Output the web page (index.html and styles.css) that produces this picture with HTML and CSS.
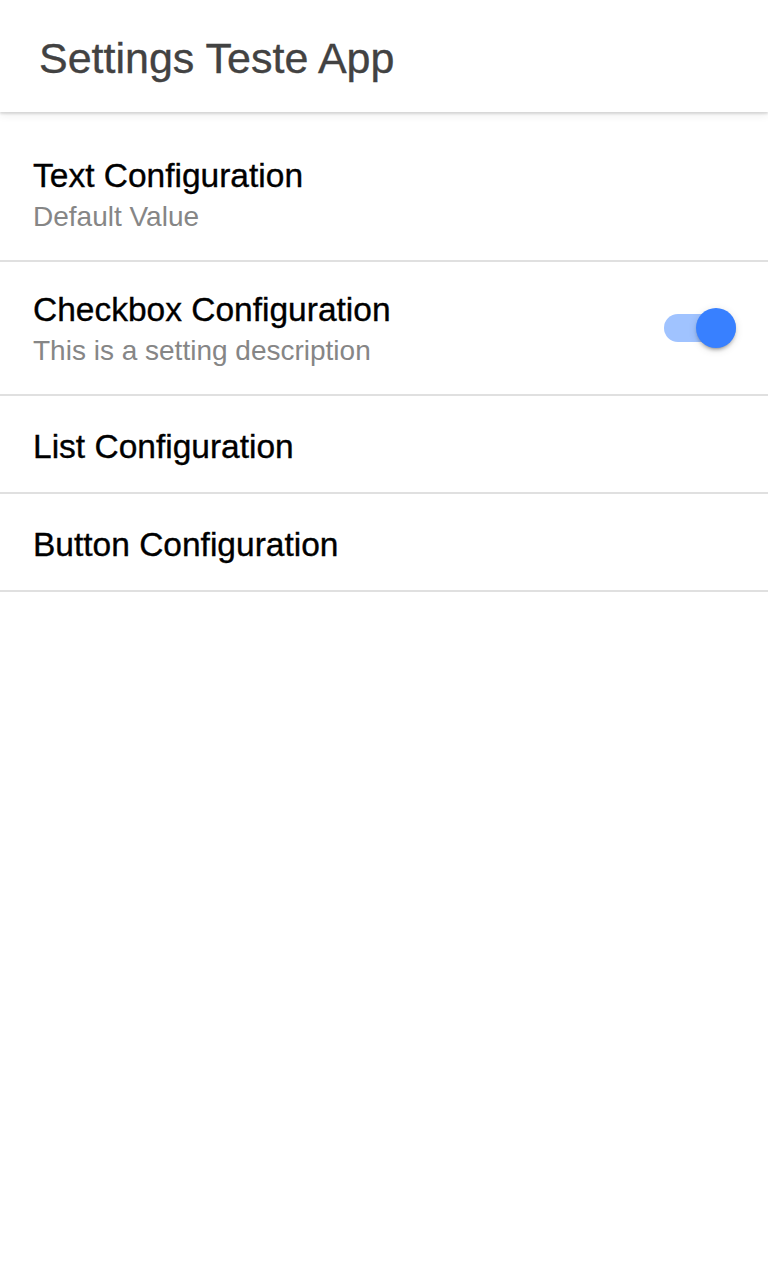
FILE: index.html
```html
<!DOCTYPE html>
<html lang="en">
<head>
<meta charset="utf-8">
<title>Settings Teste App</title>
<link rel="stylesheet" href="styles.css">
</head>
<body>
  <header class="toolbar">
    <h1 class="toolbar-title">Settings Teste App</h1>
  </header>
  <main class="content">
    <ul class="list">
      <li class="item">
        <div class="label two-line">
          <h2 class="item-title">Text Configuration</h2>
          <p class="item-desc">Default Value</p>
        </div>
      </li>
      <li class="item">
        <div class="label two-line">
          <h2 class="item-title">Checkbox Configuration</h2>
          <p class="item-desc">This is a setting description</p>
        </div>
        <div class="toggle" role="switch" aria-checked="true">
          <span class="toggle-track"></span>
          <span class="toggle-thumb"></span>
        </div>
      </li>
      <li class="item">
        <div class="label">
          <h2 class="item-title">List Configuration</h2>
        </div>
      </li>
      <li class="item">
        <div class="label">
          <h2 class="item-title">Button Configuration</h2>
        </div>
      </li>
    </ul>
  </main>
</body>
</html>
```

FILE: styles.css
```css
* {
  box-sizing: border-box;
}

html, body {
  margin: 0;
  padding: 0;
  background: #ffffff;
  font-family: "Liberation Sans", Arial, Helvetica, sans-serif;
}

.toolbar {
  position: relative;
  z-index: 1;
  height: 112px;
  padding: 34px 39px 0;
  background: #ffffff;
  box-shadow: 0 2px 2px rgba(0, 0, 0, 0.12), 0 4px 8px rgba(0, 0, 0, 0.06);
}

.toolbar-title {
  margin: 0;
  font-size: 43px;
  line-height: 48px;
  font-weight: 400;
  color: #424242;
  -webkit-text-stroke: 0.35px #424242;
}

.content {
  background: #ffffff;
}

.list {
  list-style: none;
  margin: 0;
  padding: 16px 0 0;
}

.item {
  display: flex;
  align-items: center;
  min-height: 98px;
  padding: 0 32px 0 33px;
  border-bottom: 2px solid #e0e0e0;
}

.label {
  flex: 1;
  min-width: 0;
  padding: 32px 0 26px;
}

.label.two-line {
  padding: 29px 0 26px;
}

.item-title {
  margin: 0;
  font-size: 33.5px;
  line-height: 38px;
  font-weight: 400;
  color: #000000;
  -webkit-text-stroke: 0.35px #000000;
}

.item-desc {
  margin: 5px 0 0;
  font-size: 28px;
  line-height: 34px;
  color: #868686;
}

.toggle {
  display: grid;
  align-items: center;
  width: 72px;
  height: 40px;
  flex: none;
}

.toggle-track,
.toggle-thumb {
  grid-area: 1 / 1;
}

.toggle-track {
  height: 28px;
  border-radius: 14px;
  background: #a0c3ff;
}

.toggle-thumb {
  justify-self: end;
  width: 40px;
  height: 40px;
  border-radius: 50%;
  background: #3880ff;
  box-shadow: 0 4px 2px -3px rgba(0, 0, 0, 0.2), 0 3px 3px 0 rgba(0, 0, 0, 0.14), 0 2px 8px 0 rgba(0, 0, 0, 0.12);
}
```
